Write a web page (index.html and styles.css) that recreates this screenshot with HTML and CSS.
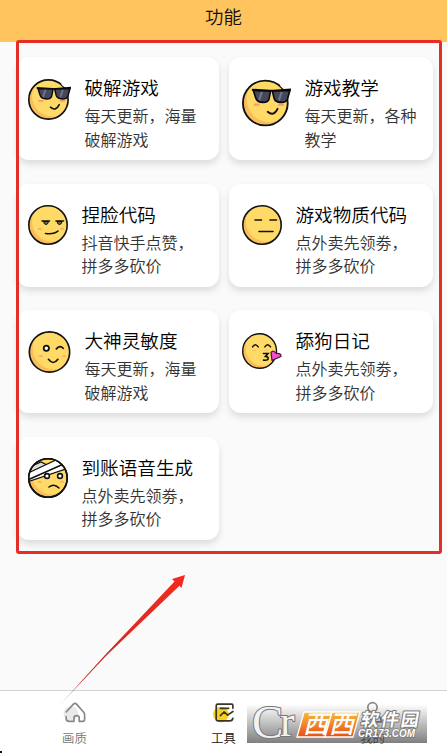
FILE: index.html
```html
<!DOCTYPE html>
<html lang="zh-CN">
<head>
  <meta charset="UTF-8" />
  <meta name="viewport" content="width=device-width, initial-scale=1.0" />
  <title>功能</title>
  <link rel="stylesheet" href="styles.css">
</head>
<body>
  <svg class="defs" width="0" height="0">
    <defs>
      <clipPath id="face-clip"><circle cx="20" cy="20" r="19" /></clipPath>
      <g id="face">
        <circle cx="20" cy="20" r="19" fill="#f9bd5c" />
        <circle cx="24" cy="16.500" r="20" fill="#ffda67" clip-path="url(#face-clip)" />
        <circle class="line" cx="20" cy="20" r="19.200" />
      </g>
      <g id="blush" fill="#f9a66c">
        <path d="M9 24.500q2.500-3.500 5.500 0z" />
        <path d="M31.500 24.500q2.500-3.500 5 0z" />
      </g>
      <g id="shades">
        <use href="#face" />
        <path d="M10 20.500h5v1.800h-5zM31 20.500h5v1.800h-5z" fill="#f99a70" />
        <path d="M33 4.500l3 3" stroke="#fff" stroke-width="1.500" />
        <path d="M9.800 9.500h14.700l-1.300 7q-1 3-5 3-5.500 0-6.500-4zM26 9.500h15l-2 7q-1 3-5.500 3-5 0-6-3.500z" fill="#45485b" stroke="#090909" stroke-width="1.400" />
        <path d="M8.500 8.600l15.500.9h3L42 8.400" fill="none" stroke="#090909" stroke-width="1.700" />
        <path d="M16 10.500l-2 6.500 1.500 1 2.500-7.500zM33 10.500l-2 6.500 1.500 1 2.500-7.500z" fill="#70758a" />
        <path class="line" d="M22 27.500q5 4.500 8.500-2.500" />
      </g>
    </defs>
  </svg>

  <header class="topbar">功能</header>

  <main class="grid">
    <div class="card">
      <svg class="icon icon-glasses" viewBox="0 0 42 40"><use href="#shades" /></svg>
      <div class="info">
        <h2>破解游戏</h2>
        <p>每天更新，海量<br>破解游戏</p>
      </div>
    </div>
    <div class="card">
      <svg class="icon icon-glasses-lg" viewBox="0 0 42 40"><use href="#shades" /></svg>
      <div class="info">
        <h2>游戏教学</h2>
        <p>每天更新，各种<br>教学</p>
      </div>
    </div>
    <div class="card">
      <svg class="icon" viewBox="0 0 40 40">
        <use href="#face" /><use href="#blush" />
        <path class="line" d="M14 16h7.500M28 16h7.500M17.500 28.500q9 1 12.500-2.500" />
        <path d="M15.500 16.500h5q-.5 3-2.500 3t-2.500-3zM29 16.500h5q-.5 3-2.500 3t-2.500-3z" fill="#776238" stroke="#111" />
      </svg>
      <div class="info">
        <h2>捏脸代码</h2>
        <p>抖音快手点赞，<br>拼多多砍价</p>
      </div>
    </div>
    <div class="card">
      <svg class="icon" viewBox="0 0 40 40">
        <use href="#face" />
        <path class="line" d="M13 15h6.500M28 15h6.500M17 26.500h14" />
      </svg>
      <div class="info">
        <h2>游戏物质代码</h2>
        <p>点外卖先领劵，<br>拼多多砍价</p>
      </div>
    </div>
    <div class="card">
      <svg class="icon icon-wink" viewBox="0 0 40 40">
        <use href="#face" /><use href="#blush" />
        <circle cx="17" cy="16.500" r="2.500" fill="#fff" stroke="#111" stroke-width="1.700" />
        <path class="line" d="M26.500 17q3.500-4 6.500-.5M19 27q4.500 6 9 0" />
      </svg>
      <div class="info">
        <h2>大神灵敏度</h2>
        <p>每天更新，海量<br>破解游戏</p>
      </div>
    </div>
    <div class="card">
      <svg class="icon icon-kiss" viewBox="0 0 40 36">
        <g transform="scale(.88 .9)">
          <use href="#face" />
          <path d="M11 19.500q3-2 5 0zM25 19.500q3-2 5 0z" fill="#f9a66c" />
          <path class="line" d="M12 15.500q3-5 6.500 0M26 15.500q3-5 6.500 0" />
        </g>
        <path class="line" d="M21.500 20.500h4.500l-2.500 2.900q3 .2 2.700 2.200-.4 2-4.700 1.500" />
        <path d="M30 27.500l-1-8q2-3 5.500 1 5-.5 4.500 3z" fill="#ed52cb" stroke="#401838" stroke-width="1.200" stroke-linejoin="round" />
      </svg>
      <div class="info">
        <h2>舔狗日记</h2>
        <p>点外卖先领劵，<br>拼多多砍价</p>
      </div>
    </div>
    <div class="card">
      <svg class="icon" viewBox="0 0 40 40">
        <use href="#face" /><use href="#blush" />
        <g clip-path="url(#face-clip)" stroke="#111" stroke-width="1.200">
          <path d="M4 8l9-4 8 4-9 5-10 1z" fill="#ddd" />
          <path d="M-1 22.500L36 6l3 4.500L-1 24z" fill="#fff" />
          <path d="M-1 15.500L28 2l6 4.500L-1 22z" fill="#fff" />
        </g>
        <circle class="line" cx="20" cy="20" r="19.200" />
        <circle cx="19" cy="18" r="2.400" fill="#fff" stroke="#111" stroke-width="1.600" />
        <circle cx="32" cy="18" r="2.400" fill="#fff" stroke="#111" stroke-width="1.600" />
        <path class="line" d="M21 29q5-4 10 1" />
      </svg>
      <div class="info">
        <h2>到账语音生成</h2>
        <p>点外卖先领劵，<br>拼多多砍价</p>
      </div>
    </div>
  </main>

  <nav class="tabbar">
    <div class="tab">
      <svg class="tab-icon" viewBox="0 0 24 24">
        <circle cx="8.500" cy="13" r="7" fill="#e9e9e9" stroke="none" />
        <path d="M4 11.500l7-7.500q1.500-1.500 3 0l7 8q1 1.500.7 4v2.500q0 2-2 2h-3.200v-3.500q0-2-2.500-2t-2.500 2v3.500H7q-3 0-3-2.500V16" />
      </svg>
      <span>画质</span>
    </div>
    <div class="tab active">
      <svg class="tab-icon" viewBox="0 0 24 24">
        <circle cx="9.500" cy="14" r="7.500" fill="#f9cf20" stroke="none" />
        <path d="M21 8V5q0-1-1-1H6.500Q5 4 5 5.500v13Q5 20 6.500 20H18q2.500 0 3-2.500M9 8h8M9 15l3.500-3.500 3.500 3 5-3.500" />
      </svg>
      <span>工具</span>
    </div>
    <div class="tab">
      <svg class="tab-icon" viewBox="0 0 24 24">
        <circle cx="12" cy="7" r="4.500" />
        <path d="M3.500 21q0-7 8.500-7t8.500 7z" />
      </svg>
      <span>我的</span>
    </div>
  </nav>

  <!-- highlight frame and arrow -->
  <div class="frame"></div>
  <svg class="arrow" viewBox="0 0 130 135">
    <defs>
      <linearGradient id="arrow-fill" x1="0" y1="1" x2="1" y2="0">
        <stop offset="0" stop-color="#c33" stop-opacity=".25" />
        <stop offset=".2" stop-color="#b82b24" />
        <stop offset=".6" stop-color="#e02a20" />
        <stop offset="1" stop-color="#f52a1d" />
      </linearGradient>
    </defs>
    <path d="M1 132L48 80 117.500 6.500 115 4 128 0l-3.500 13-2-2.200L49 81z" fill="url(#arrow-fill)" />
  </svg>

  <!-- site badge -->
  <svg class="badge" viewBox="0 0 180 39">
    <defs>
      <linearGradient id="badge-orange" x1="0" y1="0" x2="0" y2="1">
        <stop offset="0" stop-color="#f8bd3b" />
        <stop offset="1" stop-color="#e84e17" />
      </linearGradient>
    </defs>
    <text class="badge-c" x="5" y="34">C</text>
    <text class="badge-r" x="33" y="32">r</text>
    <g fill="url(#badge-orange)" stroke="#fff" stroke-width="1.300">
      <path d="M57 8h28l-7 25H50z" />
      <path d="M85 8h28l-7 25H78z" />
    </g>
    <text class="badge-xi" transform="translate(56 29) skewX(-14)" textLength="51">西西</text>
    <text class="badge-name" transform="translate(113 22) skewX(-10)" textLength="58">软件园</text>
    <text class="badge-url" x="111" y="33" textLength="57" lengthAdjust="spacingAndGlyphs">CR173.COM</text>
  </svg>
  <i class="corner"></i>
</body>
</html>
```
FILE: styles.css
```css
* { box-sizing: border-box; }
body {
  display: flex;
  flex-direction: column;
  height: 753px;
  margin: 0;
  overflow: hidden;
  position: relative;
  background: #fafafa;
  color: #111;
  font-family: "Noto Sans CJK SC", sans-serif;
  font-weight: 350;
}
.defs { position: absolute; }
.topbar { height: 42px; background: #ffc45d; font-size: 18.4px; line-height: 33px; text-align: center; }
.grid {
  flex: 1;
  display: grid;
  grid-template-columns: 202px 204px;
  grid-auto-rows: 103px;
  align-content: start;
  gap: 23.6px 10px;
  padding: 15px 14px 0 17px;
}
.card {
  display: flex;
  align-items: flex-start;
  gap: 14px;
  padding: 16px 0 0 13px;
  background: #fff;
  border-radius: 12px;
  box-shadow: 0 4px 7px rgba(0,0,0,0.12);
}
.card:nth-child(odd) { padding-left: 11px; }
.icon { width: 40px; height: 40px; margin-top: 5px; flex: none; overflow: visible; }
.icon-glasses { width: 43px; height: 41px; margin-top: 6px; }
.icon-glasses-lg { width: 49px; height: 48px; margin-top: 6px; }
.icon-wink { width: 43px; height: 42px; }
.icon-kiss { height: 36px; margin-top: 7px; }
.line { fill: none; stroke: #111; stroke-width: 1.6; stroke-linecap: round; }
.info { white-space: nowrap; margin-left: -0.5px; }
h2 { margin: 0; font-size: 18.6px; font-weight: 350; line-height: 28px; color: #000; }
p { margin: 3px 0 0; font-size: 16px; line-height: 23.5px; color: #333; }

.tabbar { display: flex; height: 63px; background: #fff; border-top: 1px solid #d2d2d2; }
.tab { flex: 1; display: flex; flex-direction: column; align-items: center; padding-top: 9px; font-size: 12.4px; line-height: 18px; color: #777; }
.tab span { margin-top: 4px; }
.tab.active { color: #111; }
.tab-icon { width: 25px; height: 25px; fill: none; stroke: #888; stroke-width: 1.6; stroke-linecap: round; stroke-linejoin: round; }
.active .tab-icon { stroke: #39352b; }

.frame { position: absolute; left: 16px; top: 40px; width: 426px; height: 514px; border: 3px solid #e52e25; border-radius: 3px; }
.arrow { position: absolute; left: 57px; top: 575px; width: 130px; height: 135px; }
.badge { position: absolute; left: 247px; top: 704px; width: 180px; height: 39px; background: linear-gradient(rgba(0,0,0,0), rgba(0,0,0,0.5)); overflow: visible; }
.badge text { paint-order: stroke; stroke-linejoin: round; }
.badge-c, .badge-r { font: 47px "Liberation Serif", serif; fill: #f3f3f3; stroke: #777; stroke-width: 2px; }
.badge-r { font-size: 44px; }
.badge-xi { font-size: 25px; font-weight: 500; fill: #fff; }
.badge-name { font-size: 18px; font-weight: 700; fill: #fff; stroke: #777; stroke-width: 2px; }
.badge-url { font: italic bold 11px "Liberation Sans", sans-serif; fill: #fff; stroke: #777; stroke-width: 1.5px; }
.corner { position: absolute; left: 0; bottom: 0; width: 2px; height: 2px; background: #111; }
```
